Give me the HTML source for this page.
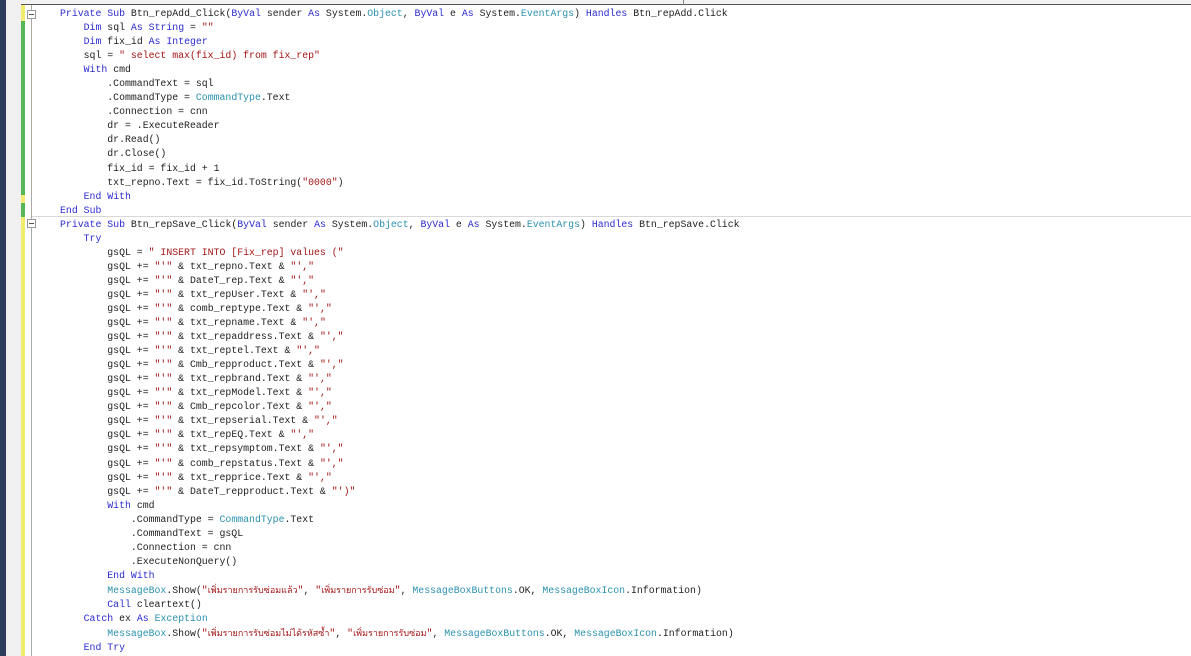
<!DOCTYPE html>
<html><head><meta charset="utf-8"><style>
html,body{margin:0;padding:0;}
body{width:1191px;height:656px;overflow:hidden;background:#fff;position:relative;}
.nav{position:absolute;left:0;top:0;width:6px;height:656px;background:#2c3c5a;}
.mg{position:absolute;left:6px;top:0;width:15px;height:656px;background:#f0f0f0;}
.top{position:absolute;left:0;top:0;width:1191px;height:4px;background:#f2f2f2;border-bottom:1px solid #555;}
.tick{position:absolute;left:683px;top:0;width:1px;height:5px;background:#888;}
.yel{position:absolute;left:21px;top:5px;width:4px;height:651px;background:#f2ec6c;}
.grn{position:absolute;left:21px;width:4px;background:#57b65a;}
.gl{position:absolute;left:31px;top:5px;width:1px;height:651px;background:#a8a8a8;}
.sep{position:absolute;left:32px;top:216px;width:1159px;height:1px;background:#d8d8d8;}
.box{position:absolute;left:27px;width:7px;height:7px;border:1px solid #999;background:#fff;}
.box:after{content:"";position:absolute;left:1px;top:3px;width:5px;height:1px;background:#555;}
pre{position:absolute;left:60px;top:7px;margin:0;font-family:"Liberation Mono",monospace;font-size:9.85px;line-height:14.04px;color:#1e1e1e;}
.k{color:#2b2bd0}.t{color:#2b91af}.s{color:#a31515}
.th{font-family:"Liberation Sans","Noto Sans CJK SC",sans-serif;font-size:9px;}
</style></head><body>
<div class="top"></div><div class="tick"></div>
<div class="nav"></div><div class="mg"></div>
<div class="yel"></div>
<div class="grn" style="top:21px;height:174px"></div>
<div class="grn" style="top:203px;height:14px"></div>
<div class="gl"></div>
<div class="sep"></div>
<div class="box" style="top:10px"></div>
<div class="box" style="top:219px"></div>
<pre><span class="k">Private</span> <span class="k">Sub</span> Btn_repAdd_Click(<span class="k">ByVal</span> sender <span class="k">As</span> System.<span class="t">Object</span>, <span class="k">ByVal</span> e <span class="k">As</span> System.<span class="t">EventArgs</span>) <span class="k">Handles</span> Btn_repAdd.Click
    <span class="k">Dim</span> sql <span class="k">As</span> <span class="k">String</span> = <span class="s">""</span>
    <span class="k">Dim</span> fix_id <span class="k">As</span> <span class="k">Integer</span>
    sql = <span class="s">" select max(fix_id) from fix_rep"</span>
    <span class="k">With</span> cmd
        .CommandText = sql
        .CommandType = <span class="t">CommandType</span>.Text
        .Connection = cnn
        dr = .ExecuteReader
        dr.Read()
        dr.Close()
        fix_id = fix_id + 1
        txt_repno.Text = fix_id.ToString(<span class="s">"0000"</span>)
    <span class="k">End</span> <span class="k">With</span>
<span class="k">End</span> <span class="k">Sub</span>
<span class="k">Private</span> <span class="k">Sub</span> Btn_repSave_Click(<span class="k">ByVal</span> sender <span class="k">As</span> System.<span class="t">Object</span>, <span class="k">ByVal</span> e <span class="k">As</span> System.<span class="t">EventArgs</span>) <span class="k">Handles</span> Btn_repSave.Click
    <span class="k">Try</span>
        gsQL = <span class="s">" INSERT INTO [Fix_rep] values ("</span>
        gsQL += <span class="s">"'"</span> &amp; txt_repno.Text &amp; <span class="s">"',"</span>
        gsQL += <span class="s">"'"</span> &amp; DateT_rep.Text &amp; <span class="s">"',"</span>
        gsQL += <span class="s">"'"</span> &amp; txt_repUser.Text &amp; <span class="s">"',"</span>
        gsQL += <span class="s">"'"</span> &amp; comb_reptype.Text &amp; <span class="s">"',"</span>
        gsQL += <span class="s">"'"</span> &amp; txt_repname.Text &amp; <span class="s">"',"</span>
        gsQL += <span class="s">"'"</span> &amp; txt_repaddress.Text &amp; <span class="s">"',"</span>
        gsQL += <span class="s">"'"</span> &amp; txt_reptel.Text &amp; <span class="s">"',"</span>
        gsQL += <span class="s">"'"</span> &amp; Cmb_repproduct.Text &amp; <span class="s">"',"</span>
        gsQL += <span class="s">"'"</span> &amp; txt_repbrand.Text &amp; <span class="s">"',"</span>
        gsQL += <span class="s">"'"</span> &amp; txt_repModel.Text &amp; <span class="s">"',"</span>
        gsQL += <span class="s">"'"</span> &amp; Cmb_repcolor.Text &amp; <span class="s">"',"</span>
        gsQL += <span class="s">"'"</span> &amp; txt_repserial.Text &amp; <span class="s">"',"</span>
        gsQL += <span class="s">"'"</span> &amp; txt_repEQ.Text &amp; <span class="s">"',"</span>
        gsQL += <span class="s">"'"</span> &amp; txt_repsymptom.Text &amp; <span class="s">"',"</span>
        gsQL += <span class="s">"'"</span> &amp; comb_repstatus.Text &amp; <span class="s">"',"</span>
        gsQL += <span class="s">"'"</span> &amp; txt_repprice.Text &amp; <span class="s">"',"</span>
        gsQL += <span class="s">"'"</span> &amp; DateT_repproduct.Text &amp; <span class="s">"')"</span>
        <span class="k">With</span> cmd
            .CommandType = <span class="t">CommandType</span>.Text
            .CommandText = gsQL
            .Connection = cnn
            .ExecuteNonQuery()
        <span class="k">End</span> <span class="k">With</span>
        <span class="t">MessageBox</span>.Show(<span class="s">"<span class="th">เพิ่มรายการรับซ่อมแล้ว</span>"</span>, <span class="s">"<span class="th">เพิ่มรายการรับซ่อม</span>"</span>, <span class="t">MessageBoxButtons</span>.OK, <span class="t">MessageBoxIcon</span>.Information)
        <span class="k">Call</span> cleartext()
    <span class="k">Catch</span> ex <span class="k">As</span> <span class="t">Exception</span>
        <span class="t">MessageBox</span>.Show(<span class="s">"<span class="th">เพิ่มรายการรับซ่อมไม่ได้รหัสซ้ำ</span>"</span>, <span class="s">"<span class="th">เพิ่มรายการรับซ่อม</span>"</span>, <span class="t">MessageBoxButtons</span>.OK, <span class="t">MessageBoxIcon</span>.Information)
    <span class="k">End</span> <span class="k">Try</span>
</pre>
</body></html>
